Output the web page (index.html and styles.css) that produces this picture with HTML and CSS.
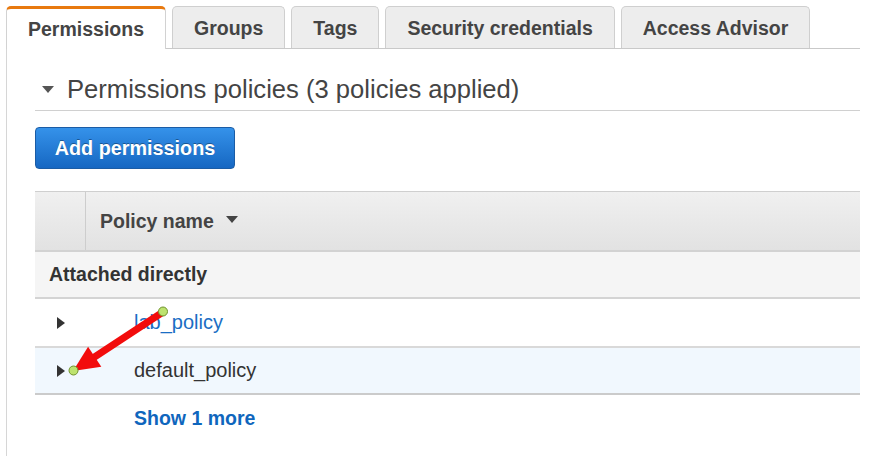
FILE: index.html
```html
<!DOCTYPE html>
<html>
<head>
<meta charset="utf-8">
<link rel="stylesheet" href="styles.css">
</head>
<body>
<div class="page">
  <div class="tabs">
    <div class="tab active">Permissions</div>
    <div class="tab">Groups</div>
    <div class="tab">Tags</div>
    <div class="tab">Security credentials</div>
    <div class="tab">Access Advisor</div>
  </div>
  <div class="panel">
    <div class="section-head">
      <span class="caret-down big"></span>
      <span class="section-title">Permissions policies (3 policies applied)</span>
    </div>
    <button class="btn-primary">Add permissions</button>
    <div class="grid">
      <div class="row head">
        <div class="cell-toggle"></div>
        <div class="cell-name">Policy name <span class="caret-down small"></span></div>
      </div>
      <div class="row group">Attached directly</div>
      <div class="row item">
        <div class="cell-toggle"><span class="caret-right"></span></div>
        <div class="cell-name"><a class="link">lab_policy</a></div>
      </div>
      <div class="row item selected">
        <div class="cell-toggle"><span class="caret-right"></span></div>
        <div class="cell-name">default_policy</div>
      </div>
      <div class="row more">
        <a class="link strong">Show 1 more</a>
      </div>
    </div>
  </div>
  <svg class="annotation" width="874" height="462" viewBox="0 0 874 462">
    <line x1="163" y1="312" x2="93" y2="358" stroke="#f20c0c" stroke-width="7" stroke-linecap="round"/>
    <polygon points="73,371 101.3,366.8 88.1,346.8" fill="#f20c0c"/>
    <circle cx="163" cy="311.5" r="4.5" fill="#bde36f" stroke="#6f922e" stroke-width="1"/>
    <circle cx="73.5" cy="370.5" r="4.5" fill="#bde36f" stroke="#6f922e" stroke-width="1"/>
  </svg>
</div>
</body>
</html>
```

FILE: styles.css
```css
* { box-sizing: border-box; }
html, body { margin: 0; padding: 0; background: #fff; }
body {
  font-family: "Liberation Sans", Arial, Helvetica, sans-serif;
  color: #444;
  width: 874px;
  height: 462px;
  overflow: hidden;
}
.page {
  position: relative;
  padding: 6px 0 0 6px;
  width: 860px;
}
.tabs {
  display: flex;
  align-items: flex-end;
  gap: 6px;
  height: 43px;
  border-bottom: 1px solid #c9c9c9;
}
.tab {
  height: 42px;
  padding: 1px 21px 0;
  display: flex;
  align-items: center;
  font-size: 19.5px;
  font-weight: bold;
  color: #444;
  background: #ededed;
  border: 1px solid #cfcfcf;
  border-bottom: none;
  border-radius: 5px 5px 0 0;
}
.tab.active {
  height: 43px;
  background: #fff;
  border-top: 3px solid #e8790f;
  border-left-color: #d2d2d2;
  border-right-color: #d2d2d2;
  margin-bottom: -1px;
  padding: 0 21px 0 21px;
}
.panel {
  border-left: 1px solid #d6d6d6;
  height: 407px;
  padding: 25px 0 0 28px;
}
.section-head {
  display: flex;
  align-items: center;
  height: 37px;
  padding-bottom: 7px;
  border-bottom: 1px solid #d0d0d0;
  padding-left: 7px;
  gap: 13px;
}
.section-title {
  font-size: 25.6px;
  line-height: 30px;
  color: #444;
}
.caret-down {
  display: inline-block;
  width: 0;
  height: 0;
  border-left: 6px solid transparent;
  border-right: 6px solid transparent;
  border-top: 7px solid #555;
}
.caret-down.big { margin-top: 2px; }
.caret-down.small {
  border-left-width: 6.5px;
  border-right-width: 6.5px;
  border-top-width: 7px;
  border-top-color: #444;
  margin-left: 12px;
  vertical-align: middle;
  position: relative;
  top: -2px;
}
.caret-right {
  display: inline-block;
  width: 0;
  height: 0;
  border-top: 6.5px solid transparent;
  border-bottom: 6.5px solid transparent;
  border-left: 8px solid #333;
}
.btn-primary {
  display: block;
  margin-top: 16px;
  width: 200px;
  height: 42px;
  border: 1px solid #1b5ca5;
  border-radius: 4px;
  background: linear-gradient(#3592ea, #1667c2);
  color: #fff;
  font-family: inherit;
  font-size: 19.8px;
  font-weight: bold;
  text-shadow: 0 -1px 0 rgba(0, 0, 0, 0.35);
  padding: 0;
}
.grid {
  margin-top: 22px;
  font-size: 19.5px;
}
.row {
  display: flex;
  align-items: center;
}
.row.head {
  height: 61px;
  border-top: 1px solid #cfcfcf;
  border-bottom: 2px solid #d2d2d2;
  background: linear-gradient(#f0f0f0, #e2e2e2);
  align-items: stretch;
}
.row.head .cell-toggle {
  width: 51px;
  border-right: 1px solid #cdcdcd;
}
.row.head .cell-name {
  display: flex;
  align-items: center;
  padding-left: 14px;
  font-weight: bold;
  color: #444;
}
.row.group {
  height: 47px;
  background: #f5f5f5;
  border-bottom: 2px solid #d4d4d4;
  font-weight: bold;
  color: #333;
  padding-left: 14px;
}
.row.item {
  height: 49px;
  border-bottom: 2px solid #d9d9d9;
  font-size: 20px;
  color: #333;
}
.row.item.selected {
  height: 47px;
  background: #f1f8fe;
  border-bottom-color: #cbcbcb;
}
.row.item .cell-toggle {
  width: 50px;
  display: flex;
  justify-content: center;
  padding-left: 1px;
}
.row.item .cell-name {
  padding-left: 49px;
}
.row.more {
  height: 46px;
  padding-left: 99px;
}
.link {
  color: #1a6ec4;
  text-decoration: none;
}
.link.strong {
  font-weight: bold;
  color: #0f66bd;
}
.annotation {
  position: absolute;
  left: 0;
  top: 0;
  pointer-events: none;
}
```
